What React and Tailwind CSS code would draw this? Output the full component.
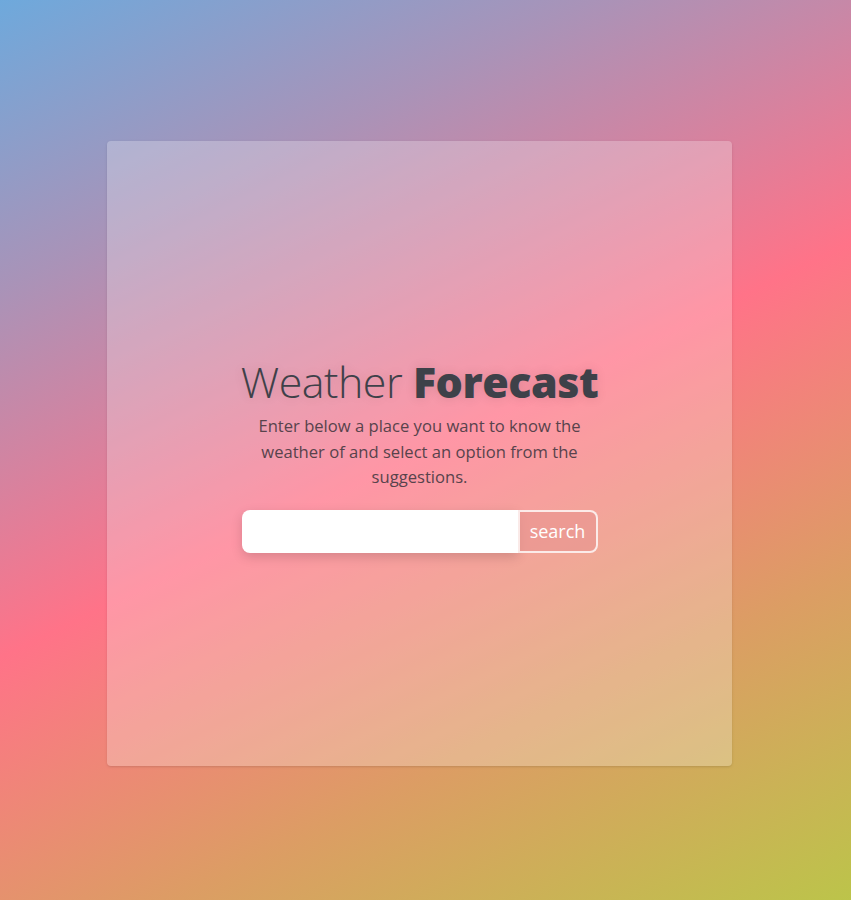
export default function App() {
  return (
    <div
      className="flex min-h-screen w-full items-center justify-center pr-[12px] pt-[6px] bg-[linear-gradient(154deg,#6ea9dc_0%,#a993b8_22%,#ff7388_50%,#dc9d64_75%,#bcc44a_100%)]"
      style={{ fontFamily: '"Open Sans", "Noto Sans", sans-serif' }}
    >
      <div className="flex h-[625px] w-[625px] items-center justify-center rounded bg-white/25 shadow-sm">
        <div className="flex w-[356px] flex-col items-center pt-[4px]">
          <h1 className="whitespace-nowrap text-[43px] leading-[50px] tracking-[-0.5px] text-[#3e4149] [text-shadow:0_0_12px_rgba(0,0,0,0.12)]">
            <span className="font-light">Weather </span>
            <span className="font-extrabold">Forecast</span>
          </h1>
          <p className="mt-[6px] w-[340px] text-center text-[16.6px] leading-[25.5px] text-[#58434c]">
            Enter below a place you want to know the weather of and select an option from the suggestions.
          </p>
          <div className="mt-[20px] flex h-[43px] w-full">
            <input
              type="text"
              className="h-full flex-1 rounded-l-lg bg-white px-3 text-base outline-none shadow-[0_4px_12px_rgba(0,0,0,0.15)]"
            />
            <button
              type="button"
              className="h-full w-[80px] rounded-r-lg border-2 border-white/80 bg-[#e8958f]/60 text-[18px] text-white"
            >
              search
            </button>
          </div>
        </div>
      </div>
    </div>
  );
}
